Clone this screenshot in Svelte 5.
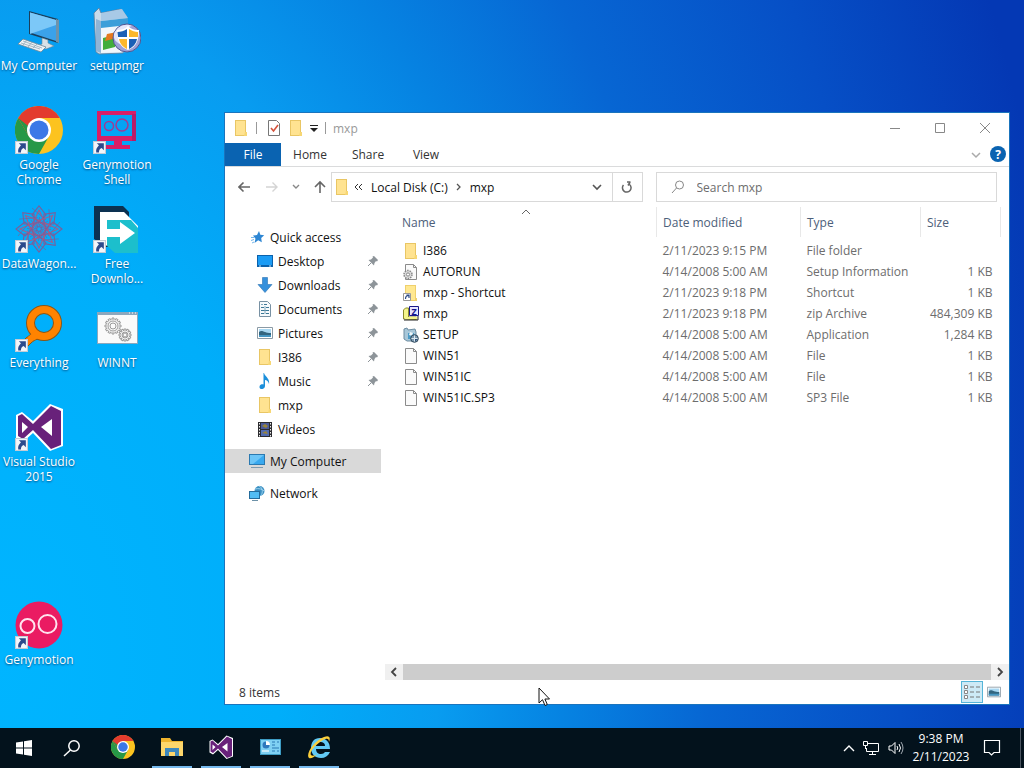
<script lang="ts">
  interface Shortcut {
    label: string;
    icon: string;
    col: number;
    row: number;
    link?: boolean;
  }

  interface Place {
    label: string;
    icon: string;
    pinned?: boolean;
  }

  interface FileRow {
    name: string;
    icon: string;
    modified: string;
    type: string;
    size: string;
  }

  const shortcuts: Shortcut[] = [
    { label: 'My Computer', icon: 'computer', col: 1, row: 1 },
    { label: 'setupmgr', icon: 'installer', col: 2, row: 1 },
    { label: 'Google Chrome', icon: 'chrome', col: 1, row: 2, link: true },
    { label: 'Genymotion Shell', icon: 'genyshell', col: 2, row: 2, link: true },
    { label: 'DataWagon...', icon: 'wagon', col: 1, row: 3, link: true },
    { label: 'Free Downlo...', icon: 'fdm', col: 2, row: 3, link: true },
    { label: 'Everything', icon: 'everything', col: 1, row: 4, link: true },
    { label: 'WINNT', icon: 'batch', col: 2, row: 4 },
    { label: 'Visual Studio 2015', icon: 'vs', col: 1, row: 5, link: true },
    { label: 'Genymotion', icon: 'geny', col: 1, row: 7, link: true }
  ];

  const places: Place[] = [
    { label: 'Desktop', icon: 'desktop', pinned: true },
    { label: 'Downloads', icon: 'download', pinned: true },
    { label: 'Documents', icon: 'document', pinned: true },
    { label: 'Pictures', icon: 'picture', pinned: true },
    { label: 'I386', icon: 'folder', pinned: true },
    { label: 'Music', icon: 'music', pinned: true },
    { label: 'mxp', icon: 'folder' },
    { label: 'Videos', icon: 'video' }
  ];

  const files: FileRow[] = [
    { name: 'I386', icon: 'folder', modified: '2/11/2023 9:15 PM', type: 'File folder', size: '' },
    { name: 'AUTORUN', icon: 'inf', modified: '4/14/2008 5:00 AM', type: 'Setup Information', size: '1 KB' },
    { name: 'mxp - Shortcut', icon: 'folderlink', modified: '2/11/2023 9:18 PM', type: 'Shortcut', size: '1 KB' },
    { name: 'mxp', icon: 'zip', modified: '2/11/2023 9:18 PM', type: 'zip Archive', size: '484,309 KB' },
    { name: 'SETUP', icon: 'setup', modified: '4/14/2008 5:00 AM', type: 'Application', size: '1,284 KB' },
    { name: 'WIN51', icon: 'file', modified: '4/14/2008 5:00 AM', type: 'File', size: '1 KB' },
    { name: 'WIN51IC', icon: 'file', modified: '4/14/2008 5:00 AM', type: 'File', size: '1 KB' },
    { name: 'WIN51IC.SP3', icon: 'file', modified: '4/14/2008 5:00 AM', type: 'SP3 File', size: '1 KB' }
  ];

  const apps = [
    { label: 'Google Chrome', icon: 'chrome', open: false },
    { label: 'File Explorer', icon: 'explorer', open: true },
    { label: 'Visual Studio', icon: 'vs', open: true },
    { label: 'Control Panel', icon: 'panel', open: true },
    { label: 'Internet Explorer', icon: 'ie', open: true }
  ];

  const teeth = [0, 30, 60, 90, 120, 150, 180, 210, 240, 270, 300, 330];
  const petals = [0, 45, 90, 135, 180, 225, 270, 315];

  let query = $state('');
</script>

{#snippet gear(cx: number, cy: number, r: number)}
  <g fill="none" stroke="#9a9a9a">
    {#each teeth as a}
      <path d="M{cx - 1} {cy - r}v-2h2v2" transform="rotate({a} {cx} {cy})" />
    {/each}
    <circle {cx} {cy} r={r - 1} />
    <circle {cx} {cy} r={r / 2} />
  </g>
{/snippet}

<!-- 48px artwork -->
{#snippet bigIcon(name: string)}
  <svg class="big" viewBox="0 0 48 48" aria-hidden="true">
    {#if name === 'computer'}
      <path d="M14 4l29 8v24l-29-9z" fill="#1b3f5c" />
      <path d="M15 5.500l26 7.500v21l-26-8.500z" fill="#3ba2ea" />
      <path d="M15 5.500l26 7.500v5l-26 9z" fill="#7cc8f8" />
      <path d="M41 12l3 1v23l-3-1z" fill="#6f93aa" />
      <path d="M27 31l6 2v3l6 3-8 3-8-3 4-2z" fill="#d7e1e8" stroke="#6c8495" stroke-width=".6" />
      <path d="M8 32l23 8-5 5-23-8z" fill="#eef3f6" stroke="#6d8797" stroke-width=".8" />
      <path d="M8 34l19 7M6 36l19 6M12 33l-4 5M17 35l-4 5M22 37l-4 4" stroke="#93aab8" stroke-width=".8" />
    {:else if name === 'installer'}
      <path d="M1 6l5-5 2 5 20-4 6 8-4 36-24 1-3-2z" fill="#c9dbea" stroke="#5f7f9c" stroke-width=".8" />
      <path d="M3 12l5 2v32l-5-2z" fill="#8fb4d6" />
      <path d="M8 13l27-2v34L8 46z" fill="#f1f6fb" />
      <path d="M8 6l21-4 6 9-27 3z" fill="#a8c9e6" />
      <path d="M8 14l27-3v7L8 21z" fill="#3b9ed9" />
      <path d="M10 31l12-3v12l-12 3z" fill="#42ad3b" />
      <path d="M14 27l10-2v6l-12 3z" fill="#e5791f" />
      <circle cx="34" cy="31" r="14" fill="#9da1d6" stroke="#50568f" />
      <path d="M21 27c3-9 13-11 18-8-7 2-11 6-12 18-4-2-7-5-6-10z" fill="#e4e6fa" />
      <path d="M35 19c4 4 8 4 11 4 0 11-3 17-11 20-8-3-11-9-11-20 4 0 8-1 11-4z" fill="#fff" />
      <path d="M34 22v8h-9c0-2-.500-3-.500-5 3 0 7-1 9.500-3zM36 32h8c-1 5-4 8-8 10z" fill="#1b5fb5" />
      <path d="M36 22c3 2 6 3 9 3v5h-9zM26 32h8v10c-4-2-7-5-8-10z" fill="#fcb72b" />
    {:else if name === 'chrome'}
      <circle cx="24" cy="24" r="24" fill="#fcc31f" />
      <path d="M3.200 12A24 24 0 0 1 44.800 12H24v12z" fill="#e33b2e" />
      <path d="M3.200 12l10.500 18 10.300 5 10.400-5.500L24 48A24 24 0 0 1 3.200 12z" fill="#279847" />
      <path d="M3.200 12l10.500 18L24 24V12z" fill="#e33b2e" />
      <path d="M3.200 12l10.500 18 2-8z" fill="#279847" />
      <circle cx="24" cy="24" r="12" fill="#fff" />
      <circle cx="24" cy="24" r="9.500" fill="#3b78e7" />
    {:else if name === 'genyshell'}
      <path fill-rule="evenodd" d="M4 5h39v30H29v4h8v4H12v-4h9v-4H4zm4 4v21h31V9z" fill="#d81e66" />
      <path d="M39 8h4v27h-4z" fill="#b91b68" />
      <g fill="none" stroke="#a03a94" stroke-width="1.500">
        <circle cx="16" cy="20" r="4.500" />
        <circle cx="29" cy="19" r="6" />
      </g>
    {:else if name === 'wagon'}
      <g fill="none" stroke="#7a5f9b" stroke-width="1.100">
        {#each petals as a}
          <path d="M24 17l7-7-7-9-7 9z" transform="rotate({a} 24 24)" />
          <path d="M18 18h12L24 5z" transform="rotate({a} 24 24)" stroke="#a95b85" />
          <path d="M24 20l5-5M24 28l-8-13M17 3l14 12" transform="rotate({a} 24 24)" stroke-width=".7" />
        {/each}
        <circle cx="24" cy="24" r="7" />
      </g>
    {:else if name === 'fdm'}
      <path d="M1 1h29l6 6v35H13L1 34z" fill="#0c3151" />
      <path d="M7 7h24l14 14v12l-18 8H14l-7-6z" fill="#fff" />
      <path d="M14 15h24l7 8v25H22l-8-7z" fill="#1cbfcc" />
      <path d="M7 24h20v-7l15 11-15 11v-7H14v6l-7-5z" fill="#fff" />
    {:else if name === 'everything'}
      <path d="M19 27l7 7c-5 1-8 3-10 5l-8 8-5-5 8-8c3-2 5-4 8-7z" fill="#ff8300" stroke="#8a5616" />
      <circle cx="29" cy="19" r="13.500" fill="none" stroke="#8a5616" stroke-width="9" />
      <circle cx="29" cy="19" r="13.500" fill="none" stroke="#ff8300" stroke-width="7" />
      <path d="M20 27l6 6-7 3-6-3z" fill="#ff8300" />
    {:else if name === 'batch'}
      <path d="M4 8h41v32H4z" fill="#8ba7bd" />
      <path d="M5 11h39v28H5z" fill="#fafafa" />
      <path d="M36 9h1M39 9h1M42 9h1" stroke="#fff" />
      {@render gear(20, 22, 6)}
      {@render gear(32, 31, 4)}
    {:else if name === 'vs'}
      <path d="M1 12l6-3 11 9L35 1l13 5v37l-13 5-17-18-10 9-7-4z" fill="#fff" />
      <path d="M3 13l4-2 11 10L36 3l10 5v34l-10 4-18-19-10 9-5-3zm4 6v11l6-6zm30-3L26 24l11 9z" fill="#68217a" fill-rule="evenodd" />
    {:else if name === 'geny'}
      <circle cx="24" cy="24" r="23.500" fill="#ea1b62" />
      <g fill="none" stroke="#ffe4ef" stroke-width="2">
        <circle cx="12.500" cy="25" r="7" />
        <circle cx="32.500" cy="23" r="9" />
      </g>
    {/if}
  </svg>
{/snippet}

<!-- 16px artwork -->
{#snippet smallIcon(name: string)}
  <svg class="small" viewBox="0 0 16 16" aria-hidden="true">
    {#if name === 'folder'}
      <path d="M2 0h11v13h1v3H2z" fill="#e9c664" />
      <path d="M3 1h9v14H3z" fill="#ffe391" />
      <path d="M12 12h2v4h-3z" fill="#f7d774" />
    {:else if name === 'folderlink'}
      <path d="M2 0h11v13h1v3H2z" fill="#efd06c" />
      <path d="M3 1h9v14H3z" fill="#ffe891" />
      <path d="M.500 8.500h7v7h-7z" fill="#fff" stroke="#999" />
      <path d="M2.500 14c0-3 1-3.500 3-3.500M3.500 10h2.500v3" fill="none" stroke="#2b4a87" stroke-width="1.200" />
    {:else if name === 'file'}
      <path d="M2.500.500h8l3 3v12h-11z" fill="#fafafa" stroke="#8b8b8b" />
      <path d="M10.500.500v3h3" fill="none" stroke="#8b8b8b" />
    {:else if name === 'inf'}
      <path d="M2.500.500h8l3 3v12h-11z" fill="#fafafa" stroke="#8b8b8b" />
      <path d="M10.500.500v3h3" fill="none" stroke="#8b8b8b" />
      <circle cx="5" cy="10.500" r="4" fill="#ddd" stroke="#888" stroke-width="1.500" stroke-dasharray="1.500 1" />
      <circle cx="5" cy="10.500" r="1.600" fill="#fff" stroke="#888" />
    {:else if name === 'zip'}
      <path d="M.500 13V4l2-2h3v9h8v2.500z" fill="#f5f58a" stroke="#8a8a2c" />
      <path d="M2 11h12v2H2z" fill="#f5f58a" />
      <path d="M1 14h14V10" fill="none" stroke="#222" />
      <path d="M6.500.500h9v9h-9z" fill="#e6e6ff" stroke="#1a1a8c" />
      <text x="11" y="8.500" text-anchor="middle" font-size="9" font-weight="700" fill="#14148c">Z</text>
    {:else if name === 'setup'}
      <path d="M1 2l3-1 1 2 7-1 1 3v9H4l-3-2z" fill="#a8c7d9" stroke="#6d8ca1" />
      <path d="M5 6h6v6H5z" fill="#4b9bc6" />
      <path d="M7 5l3 1-1 3-3-1z" fill="#eef6fa" />
      <circle cx="11.500" cy="11.500" r="3.800" fill="#7c99b0" stroke="#31495c" />
      <path d="M11.500 8.500v6M8.500 11.500h6" stroke="#dce8f0" />
      <path d="M12 12h2.500l-2.500 2.500z" fill="#274a78" />
    {:else if name === 'desktop'}
      <path d="M0 2h16v12H0z" fill="#0b62ac" />
      <path d="M1 3h14v9H1z" fill="#1b9cf5" />
      <path d="M2 13h2M12 13h2" stroke="#c6e6fb" />
    {:else if name === 'download'}
      <path d="M5.500.500h5v7h4.500L8 15.500 1 7.500h4.500z" fill="#3590dc" stroke="#2a72b2" stroke-width=".6" />
    {:else if name === 'document'}
      <path d="M2.500.500h8l3 3v12h-11z" fill="#f7fafc" stroke="#7891a3" />
      <path d="M7 3.500h3M4 6.500h3M9 6.500h3M4 9.500h8M4 12.500h3M9 12.500h3" stroke="#3c7897" />
      <path d="M4 3.500h2M8 5v8" stroke="#82a8bd" />
    {:else if name === 'picture'}
      <path d="M.500 2.500h15v11H.500z" fill="#fff" stroke="#8b9aa5" />
      <path d="M2 4h12v8H2z" fill="#a9d8f2" />
      <path d="M2 7c3-3 5 1 12 1v4H2z" fill="#33657f" />
      <path d="M2 10h12v2H2z" fill="#4696c2" />
    {:else if name === 'music'}
      <path d="M7 0c1 4 6 5 5 11-1-3-2-4-4-4v6c0 2-2 3.500-4 3S2 12.500 4 11.500c1-.500 2-.500 2.500 0V0z" fill="#1b8fdb" />
    {:else if name === 'video'}
      <path d="M1 1h14v15H1z" fill="#2c2c30" />
      <path d="M4 2h8v6H4z" fill="#4d5b98" />
      <path d="M4 9h8v6H4z" fill="#536db1" />
      <path d="M5 5l3-2 3 2-2 2zM5 12l4-2 2 3z" fill="#9b8537" />
      <path d="M2.500 2v14M13.500 2v14" stroke="#eee" stroke-dasharray="1.500 1.500" />
    {:else if name === 'computer'}
      <path d="M0 1h16v11H0z" fill="#2b79b0" />
      <path d="M1 2h14v9H1z" fill="#39a9ef" />
      <path d="M1 2h14L4 11H1z" fill="#6cc5f7" />
      <path d="M2 14.500h12" stroke="#7e9bb0" />
    {:else if name === 'network'}
      <circle cx="10.500" cy="6" r="5" fill="#3a8fc2" />
      <path d="M10 1c4 2 4 6 2 10M6 4c4-1 7 0 9 2" stroke="#9cd2ee" fill="none" />
      <path d="M0 6h11v8H0z" fill="#246c9c" />
      <path d="M1 7h9v6H1z" fill="#52bdf4" />
      <path d="M3 15.500h6" stroke="#6c91a8" />
    {:else if name === 'star'}
      <path d="M9 2l1.300 3.800 3.900.400-3 2.800.600 4.300-3.600-2L4.500 14l1-4.200L3 6.500l4-.500z" fill="#2d86d3" />
      <path d="M1 11.500l3-1M2 14l2-1M1 8.500h3" stroke="#75b6e8" />
    {:else if name === 'check'}
      <path d="M2.500.500h8l3 3v12h-11z" fill="#fff" stroke="#777" />
      <path d="M5 8l2.500 3L12 5" fill="none" stroke="#d5533c" stroke-width="1.600" />
    {/if}
  </svg>
{/snippet}

<div class="screen">
  <main class="desktop">
    <div class="icons">
      {#each shortcuts as item}
        <button class="shortcut" style="grid-column: {item.col}; grid-row: {item.row}">
          <span class="art">
            {@render bigIcon(item.icon)}
            {#if item.link}
              <svg class="arrow" viewBox="0 0 12 12" aria-hidden="true">
                <path d="M.500.500h11v11H.500z" fill="#f3f6fa" stroke="#c3ccd5" />
                <path d="M3.500 2H10v6.500L8 6.500C6 7.500 5.500 8.500 5.500 10.500H3C2.500 8 3.500 6 5.500 4z" fill="#2c4a8c" />
              </svg>
            {/if}
          </span>
          <span class="caption">{item.label}</span>
        </button>
      {/each}
    </div>

    <section class="window" aria-label="mxp">
      <header class="titlebar">
        {@render smallIcon('folder')}
        <span class="bar"></span>
        <button aria-label="Properties">{@render smallIcon('check')}</button>
        <button aria-label="New folder">{@render smallIcon('folder')}</button>
        <button class="custom" aria-label="Customize toolbar">
          <svg width="8" height="8" viewBox="0 0 8 8"><path d="M0 1.500h8" stroke="#222" /><path d="M0 4h8L4 8z" fill="#222" /></svg>
        </button>
        <span class="bar"></span>
        <span class="title">mxp</span>
        <div class="controls">
          <button aria-label="Minimize"><svg width="12" height="12"><path d="M1 6.500h10" stroke="#888" /></svg></button>
          <button aria-label="Maximize"><svg width="12" height="12"><path d="M1.500 1.500h9v9h-9z" fill="none" stroke="#888" /></svg></button>
          <button aria-label="Close"><svg width="12" height="12"><path d="M1 1l10 10M11 1L1 11" stroke="#888" /></svg></button>
        </div>
      </header>

      <nav class="ribbon">
        <button class="file">File</button>
        <button>Home</button>
        <button>Share</button>
        <button>View</button>
        <button class="expand" aria-label="Expand ribbon">
          <svg width="10" height="8"><path d="M1 2l4 4 4-4" fill="none" stroke="#aaa" stroke-width="1.500" /></svg>
        </button>
        <button class="help" aria-label="Help">?</button>
      </nav>

      <div class="address">
        <div class="arrows">
          <button aria-label="Back"><svg width="12" height="12"><path d="M12 6H1M5.500 1.500L1 6l4.500 4.500" fill="none" stroke="#666" stroke-width="1.600" /></svg></button>
          <button aria-label="Forward"><svg width="12" height="12"><path d="M0 6h11M6.500 1.500L11 6l-4.500 4.500" fill="none" stroke="#d4d4d4" stroke-width="1.400" /></svg></button>
          <button aria-label="Recent"><svg width="8" height="6"><path d="M1 1l3 3 3-3" fill="none" stroke="#888" stroke-width="1.400" /></svg></button>
          <button aria-label="Up"><svg width="12" height="14"><path d="M6 13V2M1 7l5-5 5 5" fill="none" stroke="#666" stroke-width="1.600" /></svg></button>
        </div>
        <div class="path">
          {@render smallIcon('folder')}
          <svg class="more" width="9" height="8"><path d="M4 1L1 4l3 3M8 1L5 4l3 3" fill="none" stroke="#333" /></svg>
          <button>Local Disk (C:)</button>
          <svg class="crumb" width="6" height="8"><path d="M1 1l3 3-3 3" fill="none" stroke="#555" stroke-width="1.300" /></svg>
          <button>mxp</button>
          <button class="drop" aria-label="Previous locations"><svg width="10" height="8"><path d="M1 2l4 4 4-4" fill="none" stroke="#555" stroke-width="1.600" /></svg></button>
          <button class="reload" aria-label="Refresh">
            <svg width="12" height="12"><path d="M9.500 4A4.300 4.300 0 1 1 3.500 3.500M6 1H2.500M2.800 1l2.200 3.500" fill="none" stroke="#666" stroke-width="1.500" transform="matrix(-1 0 0 1 12 0)" /></svg>
          </button>
        </div>
        <label class="search">
          <svg width="14" height="14"><circle cx="8.500" cy="5" r="4" fill="none" stroke="#888" /><path d="M5.500 8L1 13" stroke="#888" /></svg>
          <input type="text" placeholder="Search mxp" aria-label="Search mxp" bind:value={query} />
        </label>
      </div>

      <div class="body">
        <aside class="tree">
          <a class="place" href="#quick">{@render smallIcon('star')}Quick access</a>
          {#each places as place}
            <a class="place child" href="#{place.label}">
              {@render smallIcon(place.icon)}{place.label}
              {#if place.pinned}
                <svg class="pin" viewBox="0 0 12 12" aria-hidden="true">
                  <path d="M7 1l4 4-1 1.500-1-.500L7.500 8 7 10.500 1.500 5 4 4.500l2-2L5.500 1.500z" fill="#8d9499" />
                  <path d="M4 8l-3 3" stroke="#8d9499" />
                </svg>
              {/if}
            </a>
          {/each}
          <a class="place root current" href="#computer">{@render smallIcon('computer')}My Computer</a>
          <a class="place root" href="#network">{@render smallIcon('network')}Network</a>
        </aside>

        <div class="listing">
          <table>
            <colgroup>
              <col />
              <col class="wide" />
              <col class="mid" />
              <col class="narrow" />
            </colgroup>
            <thead>
              <tr>
                <th>
                  Name
                  <svg class="sort" width="10" height="6"><path d="M1 5l4-4 4 4" fill="none" stroke="#666" /></svg>
                </th>
                <th>Date modified</th>
                <th>Type</th>
                <th>Size</th>
              </tr>
            </thead>
            <tbody>
              {#each files as file}
                <tr>
                  <td class="name"><span>{@render smallIcon(file.icon)}{file.name}</span></td>
                  <td>{file.modified}</td>
                  <td>{file.type}</td>
                  <td class="size">{file.size}</td>
                </tr>
              {/each}
            </tbody>
          </table>

          <div class="scroll">
            <button aria-label="Scroll left"><svg width="8" height="10"><path d="M6 1L2 5l4 4" fill="none" stroke="#444" stroke-width="1.800" /></svg></button>
            <div class="thumb"></div>
            <button aria-label="Scroll right"><svg width="8" height="10"><path d="M2 1l4 4-4 4" fill="none" stroke="#444" stroke-width="1.800" /></svg></button>
          </div>
        </div>
      </div>

      <footer class="status">
        <span>8 items</span>
        <button class="view on" aria-label="Details view">
          <svg width="16" height="14">
            <path d="M.500.500h3v3h-3zM.500 5.500h3v3h-3zM.500 10.500h3v3h-3z" fill="#fff" stroke="#888" />
            <path d="M6 2h4M12 2h4M6 7h4M12 7h4M6 12h4M12 12h4" stroke="#777" />
          </svg>
        </button>
        <button class="view" aria-label="Large icons view">{@render smallIcon('picture')}</button>
      </footer>
    </section>

    <svg class="pointer" viewBox="0 0 12 20" aria-hidden="true">
      <path d="M1 1v15l3.500-3.300 2.500 5.800 2.300-1L6.900 12h4.600z" fill="#fff" stroke="#111" />
    </svg>
  </main>

  <footer class="taskbar">
    <button class="start" aria-label="Start">
      <svg width="16" height="16"><path d="M0 2.500l7-1v6H0zM8 1.300L16 0v7.500H8zM0 8.500h7v6l-7-1zM8 8.500h8V16l-8-1.300z" fill="#fff" /></svg>
    </button>
    <button class="find" aria-label="Search">
      <svg width="18" height="18"><circle cx="11" cy="7" r="5.200" fill="none" stroke="#fff" stroke-width="1.500" /><path d="M7.500 11L1 17" stroke="#fff" stroke-width="1.500" /></svg>
    </button>
    <div class="apps">
      {#each apps as app}
        <button class:open={app.open} aria-label={app.label}>
          {#if app.icon === 'explorer'}
            <svg viewBox="0 0 24 24">
              <path d="M1 3h9l2 3h11v15H1z" fill="#efb42d" />
              <path d="M1 7h22v14H1z" fill="#fdd66b" />
              <path d="M5 13h14v8h-4v-4H9v4H5z" fill="#3e88bd" />
            </svg>
          {:else if app.icon === 'panel'}
            <svg viewBox="0 0 24 24">
              <path d="M2 4h21v16H2z" fill="#3d9cc4" />
              <path d="M3 5h19v14H3z" fill="#7fd0f3" />
              <circle cx="8" cy="10" r="3.500" fill="#2f78bd" />
              <path d="M8 10V6a4 4 0 0 1 4 4z" fill="#fff" />
              <path d="M14 7h3M19 7h2M14 10h3M14 13h7M14 16h3M19 16h2" stroke="#2b78b4" />
              <path d="M4 16h7" stroke="#c8ecfb" stroke-width="2" />
            </svg>
          {:else if app.icon === 'ie'}
            <svg viewBox="0 0 24 24">
              <path fill-rule="evenodd" d="M13 3c6 0 10 4 10 11H9c0 3 2 5 5 5 2 0 3-1 4-2h5c-2 4-5 6-9 6-6 0-10-4-10-10S7 3 13 3zm0 4c-2 0-4 1-4 4h9c0-3-2-4-5-4z" fill="#62caf5" />
              <path d="M2 23C-2 19 8 5 17 2c5-2 7 0 5 5 0-4-2-4-6-2C9 9 2 17 4 20c1 1 3 1 6-.500C7 22 4 24 2 23z" fill="#fbcf3b" />
            </svg>
          {:else}
            {@render bigIcon(app.icon)}
          {/if}
        </button>
      {/each}
    </div>
    <div class="tray">
      <button aria-label="Show hidden icons"><svg width="12" height="8"><path d="M1 7l5-5 5 5" fill="none" stroke="#fff" stroke-width="1.400" /></svg></button>
      <button aria-label="Network">
        <svg width="17" height="16"><path d="M5 3.500h10.500v8H3.500V8M9.500 12v3M6 14.500h7M.500 1.500h4v4h-4zM2.500 6v3" fill="none" stroke="#fff" /></svg>
      </button>
      <button aria-label="Volume">
        <svg width="16" height="14"><path d="M1 5h2.500L7 1.500v11L3.500 9H1z" fill="none" stroke="#fff" /><path d="M9 5q1.500 2 0 4M11 3q3 4 0 8" fill="none" stroke="#fff" /><path d="M13 1q4 6 0 12" fill="none" stroke="#a0a8b0" /></svg>
      </button>
      <button class="clock"><span>9:38 PM</span><span>2/11/2023</span></button>
      <button class="note" aria-label="Notifications">
        <svg width="18" height="18"><path d="M1.500 1.500h15v12H11L8.500 16 6 13.500H1.500z" fill="none" stroke="#fff" stroke-width="1.200" /></svg>
      </button>
      <button class="peek" aria-label="Show desktop"></button>
    </div>
  </footer>
</div>

<style>
  :global(body) {
    font-family: 'Open Sans', 'Noto Sans', sans-serif;
    font-size: 12px;
    line-height: 15px;
  }

  button {
    display: flex;
    align-items: center;
    justify-content: center;
    padding: 0;
    border: 0;
    background: none;
    color: inherit;
    font: inherit;
  }

  svg {
    display: block;
    flex: none;
  }

  .screen {
    display: flex;
    flex-direction: column;
    min-height: 100vh;
    background: radial-gradient(ellipse 110% 220% at 0% 85%, #00b5ff 0%, #00aefa 25%, #089cf0 39%, #0683e2 50%, #0766d3 63%, #064fc6 80%, #0438b4 96%);
  }

  .desktop {
    position: relative;
    display: flex;
    flex: 1;
  }

  .icons {
    display: grid;
    grid-template-columns: 78px 78px;
    grid-template-rows: repeat(7, 99px);
    padding-top: 7px;
  }

  .shortcut {
    flex-direction: column;
    justify-content: flex-start;
    gap: 3px;
    color: #fff;
    text-shadow: 0 1px 2px #004a80;
  }

  .art {
    position: relative;
  }

  .big {
    width: 48px;
    height: 48px;
  }

  .arrow {
    position: absolute;
    left: 0;
    bottom: 0;
    width: 13px;
    height: 13px;
  }

  .caption {
    max-width: 78px;
  }

  .small {
    width: 16px;
    height: 16px;
  }

  .window {
    position: absolute;
    inset: 113px 15px 24px 225px;
    display: flex;
    flex-direction: column;
    background: #fff;
    color: #111;
    box-shadow: 0 0 0 1px #1a74bd;
  }

  .titlebar {
    display: flex;
    align-items: center;
    height: 30px;
    padding-left: 8px;
    gap: 6px;
  }

  .bar {
    width: 1px;
    height: 12px;
    margin: 0 3px 0 1px;
    background: #999;
  }

  .custom {
    width: 8px;
  }

  .title {
    margin-left: -2px;
    color: #999;
  }

  .controls {
    display: flex;
    margin: 0 2px 0 auto;
  }

  .controls button {
    width: 45px;
    height: 28px;
  }

  .ribbon {
    display: flex;
    height: 23px;
    border-bottom: 1px solid #dadbdc;
    color: #333;
  }

  .ribbon button {
    width: 58px;
  }

  .ribbon .file {
    width: 56px;
    background: #0a63b1;
    color: #fff;
  }

  .ribbon .expand {
    width: 20px;
    margin-left: auto;
  }

  .ribbon .help {
    width: 16px;
    height: 16px;
    margin: 3px 3px 0 4px;
    border-radius: 50%;
    background: #0a63b1;
    color: #fff;
    font-weight: 700;
  }

  .address {
    display: grid;
    grid-template-columns: 93px minmax(0, 312fr) minmax(0, 355fr);
    padding: 5px 12px 5px 13px;
  }

  .arrows {
    display: flex;
    align-items: center;
    gap: 16px;
  }

  .arrows button:nth-child(n + 3) {
    margin-left: -2px;
  }

  .path,
  .search {
    display: flex;
    align-items: center;
    box-sizing: border-box;
    height: 30px;
    border: 1px solid #d9d9d9;
  }

  .path {
    padding-left: 2px;
  }

  .more {
    margin: 0 8px 0 4px;
  }

  .crumb {
    margin: 0 8px;
  }

  .drop {
    width: 30px;
    margin-left: auto;
  }

  .reload {
    width: 30px;
    height: 28px;
    border-left: 1px solid #d9d9d9;
  }

  .search {
    gap: 12px;
    margin-left: 13px;
    padding-left: 14px;
  }

  .search input {
    flex: 1;
    min-width: 0;
    padding: 0;
    border: 0;
    outline: 0;
    font: inherit;
  }

  .search input::placeholder {
    color: #6d6d6d;
    opacity: 1;
  }

  .body {
    display: flex;
    flex: 1;
  }

  .tree {
    width: 156px;
    padding-top: 18px;
    margin-right: 4px;
  }

  .place {
    display: flex;
    align-items: center;
    gap: 4px;
    height: 24px;
    padding-left: 25px;
    color: #111;
    text-decoration: none;
  }

  .child {
    padding-left: 32px;
    gap: 5px;
  }

  .root {
    margin-bottom: 8px;
    padding-left: 24px;
    gap: 5px;
  }

  .child + .root {
    margin-top: 8px;
  }

  .current {
    background: #d9d9d9;
  }

  .pin {
    width: 12px;
    height: 12px;
    margin: 0 2px 0 auto;
  }

  .listing {
    display: flex;
    flex: 1;
    flex-direction: column;
    justify-content: space-between;
  }

  table {
    width: calc(100% - 8px);
    border-collapse: collapse;
    table-layout: fixed;
    color: #6d6d6d;
  }

  .wide {
    width: 144px;
  }

  .mid {
    width: 120px;
  }

  .narrow {
    width: 80px;
  }

  th {
    position: relative;
    height: 30px;
    padding: 0 6px;
    border-right: 1px solid #e8e8e8;
    color: #4c607a;
    font-weight: 400;
    text-align: left;
  }

  th:first-child {
    padding-left: 17px;
  }

  .sort {
    position: absolute;
    top: 2px;
    left: 50%;
  }

  td {
    height: 21px;
    padding: 0 6px;
    white-space: nowrap;
  }

  tbody::before {
    content: '';
    display: block;
    height: 3px;
  }

  .name {
    padding-left: 18px;
    color: #111;
  }

  .name span {
    display: flex;
    align-items: center;
    gap: 4px;
  }

  .size {
    padding-right: 8px;
    text-align: right;
  }

  .scroll {
    display: flex;
    height: 16px;
    background: #f0f0f0;
  }

  .scroll button {
    width: 18px;
  }

  .thumb {
    flex: 1;
    background: #cdcdcd;
  }

  .status {
    display: flex;
    align-items: center;
    height: 24px;
    padding: 0 4px 0 14px;
    color: #333;
  }

  .status span {
    margin-right: auto;
  }

  .view {
    width: 22px;
    height: 22px;
  }

  .view .small {
    width: 14px;
    height: 14px;
  }

  .on {
    box-sizing: border-box;
    border: 1px solid #55b5d8;
    background: #cdeaf6;
  }

  .pointer {
    position: absolute;
    left: 538px;
    top: 687px;
    width: 12px;
    height: 20px;
  }

  .taskbar {
    display: flex;
    height: 40px;
    background: #03121c;
    color: #fff;
  }

  .start,
  .find {
    width: 48px;
  }

  .apps {
    display: flex;
    gap: 9px;
    margin-left: 7px;
  }

  .apps button {
    box-sizing: border-box;
    width: 40px;
    border-bottom: 2px solid transparent;
  }

  .apps .open {
    border-color: #76b9ed;
  }

  .apps svg {
    width: 24px;
    height: 24px;
  }

  .tray {
    display: flex;
    gap: 8px;
    margin-left: auto;
  }

  .clock {
    flex-direction: column;
    width: 58px;
    line-height: 18px;
  }

  .note {
    width: 28px;
  }

  .peek {
    width: 4px;
    margin-left: 6px;
    border-left: 1px solid #4a5560;
  }
</style>
